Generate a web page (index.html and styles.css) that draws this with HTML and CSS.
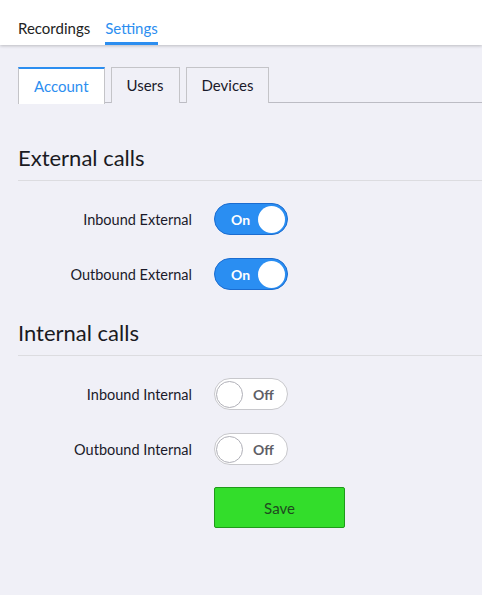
FILE: index.html
```html
<!DOCTYPE html>
<html>
<head>
<meta charset="utf-8">
<link rel="stylesheet" href="styles.css">
</head>
<body>
<header class="topnav">
  <a class="nav-item">Recordings</a>
  <a class="nav-item active">Settings</a>
</header>
<main class="content">
  <div class="tabs">
    <div class="tab active">Account</div>
    <div class="tab">Users</div>
    <div class="tab">Devices</div>
  </div>

  <section class="section">
    <h2 class="section-title">External calls</h2>
    <div class="row">
      <span class="label">Inbound External</span>
      <span class="toggle on"><span class="toggle-text">On</span><span class="knob"></span></span>
    </div>
    <div class="row">
      <span class="label">Outbound External</span>
      <span class="toggle on"><span class="toggle-text">On</span><span class="knob"></span></span>
    </div>
  </section>

  <section class="section">
    <h2 class="section-title">Internal calls</h2>
    <div class="row">
      <span class="label">Inbound Internal</span>
      <span class="toggle off"><span class="knob"></span><span class="toggle-text">Off</span></span>
    </div>
    <div class="row">
      <span class="label">Outbound Internal</span>
      <span class="toggle off"><span class="knob"></span><span class="toggle-text">Off</span></span>
    </div>
  </section>

  <div class="actions">
    <button class="save">Save</button>
  </div>
</main>
</body>
</html>
```

FILE: styles.css
```css
* { box-sizing: border-box; }
html, body {
  margin: 0;
  padding: 0;
  height: 100%;
}
body {
  background: #f0f0f7;
  font-family: "Lato", "Noto Sans", sans-serif;
  color: #1a1a2a;
}
.topnav {
  height: 45px;
  background: #fff;
  display: flex;
  align-items: flex-end;
  gap: 15px;
  padding: 0 0 0 18px;
  box-shadow: 0 1px 3px rgba(0,0,0,0.22);
  position: relative;
}
.nav-item {
  font-size: 15px;
  color: #222;
  padding-bottom: 4px;
  border-bottom: 3px solid transparent;
  line-height: 20px;
}
.nav-item.active {
  color: #2c8ef0;
  border-bottom-color: #2c8ef0;
}
.content {
  padding: 22px 0 0 18px;
}
.tabs {
  display: flex;
  gap: 6px;
  border-bottom: 1px solid #bcbcc4;
  height: 36px;
}
.tab {
  font-size: 15px;
  height: 36px;
  line-height: 35px;
  padding: 0 15px;
  border: 1px solid #c4c4c8;
  border-bottom: none;
  color: #1a1a2a;
  background: #f0f0f7;
}
.tab.active {
  background: #fff;
  color: #2c8ef0;
  border-top: 2px solid #2c8ef0;
  line-height: 34px;
  height: 37px;
  margin-bottom: -1px;
}
.section {
  margin-top: 41px;
}
.section + .section { margin-top: 29px; }
.section-title {
  font-size: 22px;
  font-weight: 400;
  margin: 0;
  line-height: 28px;
  padding-bottom: 8px;
  border-bottom: 1px solid #dcdce0;
  color: #1a1a22;
}
.row {
  display: flex;
  align-items: center;
  height: 32px;
  margin-top: 22px;
}
.row + .row { margin-top: 23px; }
.label {
  width: 174px;
  text-align: right;
  font-size: 14.5px;
  color: #1a1a2a;
}
.toggle {
  margin-left: 22px;
  width: 74px;
  height: 32px;
  border-radius: 16px;
  display: flex;
  align-items: center;
  padding: 0 2px;
  font-size: 14px;
  font-weight: 700;
}
.toggle.on {
  background: #2a8ef2;
  border: 1px solid #1b6cd0;
  color: #fff;
  justify-content: space-between;
  padding-left: 16px;
}
.toggle.off {
  background: #fff;
  border: 1px solid #c8c8cc;
  color: #5e5e66;
  padding-left: 1px;
}
.knob {
  width: 27px;
  height: 27px;
  border-radius: 50%;
  background: #fff;
}
.toggle.off .knob {
  border: 1px solid #b0b0b8;
  margin-right: 10px;
}
.actions {
  padding-left: 196px;
  margin-top: 22px;
}
.save {
  width: 131px;
  height: 41px;
  background: #33dd2b;
  border: 1px solid #1f9a1a;
  border-radius: 2px;
  font-family: inherit;
  font-size: 15px;
  color: #1f4a1f;
}
```
